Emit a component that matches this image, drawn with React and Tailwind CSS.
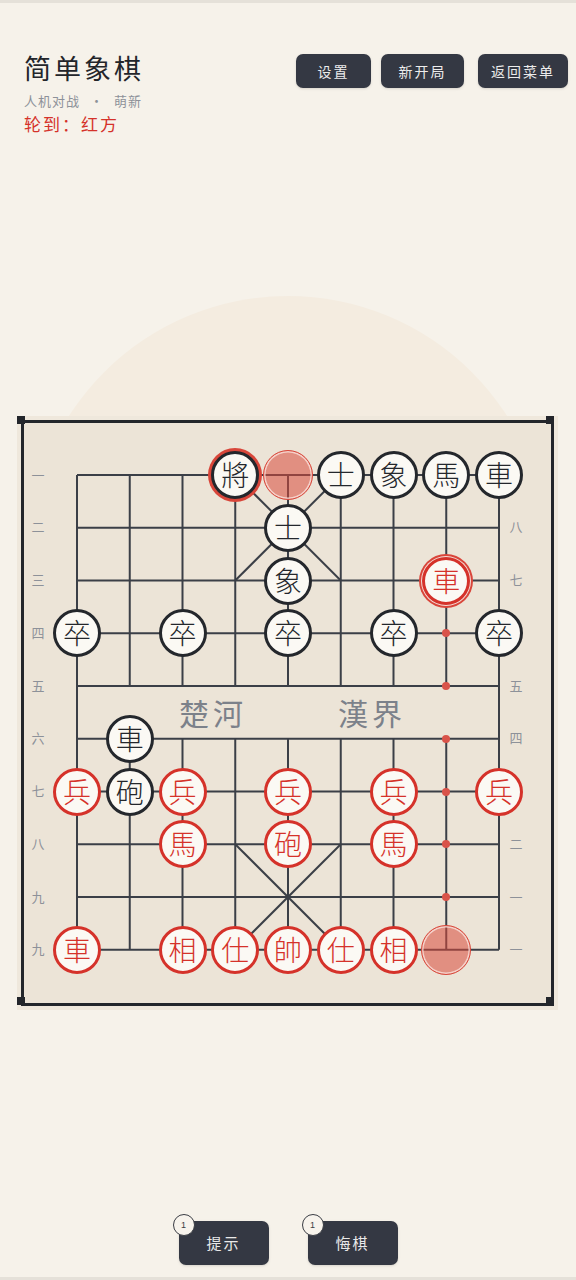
import React from 'react'

const CELL = 52.75
const OX = 53
const OY = 52
const gx = (c) => OX + c * CELL
const gy = (r) => OY + r * CELL

const pieces = [
  { c: 3, r: 0, t: '將', side: 'black', hl: true },
  { c: 5, r: 0, t: '士', side: 'black' },
  { c: 6, r: 0, t: '象', side: 'black' },
  { c: 7, r: 0, t: '馬', side: 'black' },
  { c: 8, r: 0, t: '車', side: 'black' },
  { c: 4, r: 1, t: '士', side: 'black' },
  { c: 4, r: 2, t: '象', side: 'black' },
  { c: 7, r: 2, t: '車', side: 'red', selected: true },
  { c: 0, r: 3, t: '卒', side: 'black' },
  { c: 2, r: 3, t: '卒', side: 'black' },
  { c: 4, r: 3, t: '卒', side: 'black' },
  { c: 6, r: 3, t: '卒', side: 'black' },
  { c: 8, r: 3, t: '卒', side: 'black' },
  { c: 1, r: 5, t: '車', side: 'black' },
  { c: 0, r: 6, t: '兵', side: 'red' },
  { c: 1, r: 6, t: '砲', side: 'black' },
  { c: 2, r: 6, t: '兵', side: 'red' },
  { c: 4, r: 6, t: '兵', side: 'red' },
  { c: 6, r: 6, t: '兵', side: 'red' },
  { c: 8, r: 6, t: '兵', side: 'red' },
  { c: 2, r: 7, t: '馬', side: 'red' },
  { c: 4, r: 7, t: '砲', side: 'red' },
  { c: 6, r: 7, t: '馬', side: 'red' },
  { c: 0, r: 9, t: '車', side: 'red' },
  { c: 2, r: 9, t: '相', side: 'red' },
  { c: 3, r: 9, t: '仕', side: 'red' },
  { c: 4, r: 9, t: '帥', side: 'red' },
  { c: 5, r: 9, t: '仕', side: 'red' },
  { c: 6, r: 9, t: '相', side: 'red' },
]

const lastMove = [
  { c: 4, r: 0 },
  { c: 7, r: 9 },
]

const dots = [3, 4, 5, 6, 7, 8].map((r) => ({ c: 7, r }))

const leftLabels = ['一', '二', '三', '四', '五', '六', '七', '八', '九', '九']
// rows covered by a piece on the right edge show no label
const rightLabels = ['', '八', '七', '', '五', '四', '', '二', '一', '一']

const CJK = "font-['Noto_Sans_CJK_SC','Noto_Sans_CJK_TC',sans-serif]"

function Grid() {
  const lines = []
  for (let r = 0; r < 10; r++) {
    lines.push(<line key={'h' + r} x1={gx(0)} y1={gy(r)} x2={gx(8)} y2={gy(r)} />)
  }
  for (let c = 0; c < 9; c++) {
    if (c === 0 || c === 8) {
      lines.push(<line key={'v' + c} x1={gx(c)} y1={gy(0)} x2={gx(c)} y2={gy(9)} />)
    } else {
      lines.push(<line key={'vt' + c} x1={gx(c)} y1={gy(0)} x2={gx(c)} y2={gy(4)} />)
      lines.push(<line key={'vb' + c} x1={gx(c)} y1={gy(5)} x2={gx(c)} y2={gy(9)} />)
    }
  }
  // palaces
  lines.push(<line key="p1" x1={gx(3)} y1={gy(0)} x2={gx(5)} y2={gy(2)} />)
  lines.push(<line key="p2" x1={gx(5)} y1={gy(0)} x2={gx(3)} y2={gy(2)} />)
  lines.push(<line key="p3" x1={gx(3)} y1={gy(7)} x2={gx(5)} y2={gy(9)} />)
  lines.push(<line key="p4" x1={gx(5)} y1={gy(7)} x2={gx(3)} y2={gy(9)} />)

  return (
    <svg className="absolute inset-0 w-full h-full" stroke="#3b3f47" strokeWidth="2" fill="none">
      {lines}
    </svg>
  )
}

function Piece({ p }) {
  const red = p.side === 'red'
  let ring = ''
  if (p.hl) ring = 'shadow-[0_0_0_3px_#d8463a]'
  if (p.selected) ring = 'shadow-[0_0_0_1px_#f4dcd7,0_0_0_3px_#d9453a]'
  return (
    <div
      className={`absolute w-12 h-12 rounded-full border-[3px] flex items-center justify-center bg-[#fbf9f4] text-[28px] leading-none font-light ${CJK} ${
        red ? 'border-[#d5322a] text-[#d5322a]' : 'border-[#24272c] text-[#24272c]'
      } ${ring}`}
      style={{ left: gx(p.c) - 24, top: gy(p.r) - 24 }}
    >
      <span className="-mt-[2px]">{p.t}</span>
    </div>
  )
}

function Labels({ items }) {
  return (
    <div className="flex flex-col w-5 text-center text-[13px] text-[#8d9199]">
      {items.map((l, r) => (
        <span key={r} className="h-[52.75px] leading-[52.75px]">
          {l}
        </span>
      ))}
    </div>
  )
}

export default function App() {
  return (
    <div className={`relative w-[576px] h-[1280px] overflow-hidden bg-[#f6f2ea] flex flex-col ${CJK}`}>
      <div className="h-[3px] w-full bg-[#e5e1d9]" />

      {/* soft halo behind the board */}
      <div className="absolute left-[28px] top-[296px] w-[520px] h-[520px] rounded-full bg-[#f4ece0]" />

      <div className="flex justify-between items-start pt-[49px] pl-6 pr-2">
        <div>
          <h1 className="text-[27px] leading-[32px] tracking-[3px] text-[#23252a]">简单象棋</h1>
          <p className="mt-[9px] text-[13px] leading-[16px] tracking-[1px] text-[#8d9199]">
            人机对战<span className="mx-[10px]">•</span>萌新
          </p>
          <p className="mt-[4px] text-[17px] leading-[22px] tracking-[2px] text-[#d5322a]">轮到：红方</p>
        </div>
        <div className="flex mt-[2px]">
          <button className="w-[75px] h-[34px] rounded-[7px] bg-[#343843] text-[#ececec] text-[14px] tracking-[2px] shadow-sm">
            设置
          </button>
          <button className="ml-[10px] w-[83px] h-[34px] rounded-[7px] bg-[#343843] text-[#ececec] text-[14px] tracking-[2px] shadow-sm">
            新开局
          </button>
          <button className="ml-[14px] w-[90px] h-[34px] rounded-[7px] bg-[#343843] text-[#ececec] text-[14px] tracking-[2px] shadow-sm">
            返回菜单
          </button>
        </div>
      </div>

      <div className="relative mt-[281px] ml-[17px] w-[541px] h-[594px] p-1 bg-[#efe8dc]">
        <div className="relative w-full h-full border-[3px] border-[#23262b] bg-[#ece4d7]">
          <Grid />

          <div className="absolute inset-x-0 top-[25.6px] flex justify-between pl-[4px] pr-[25px]">
            <Labels items={leftLabels} />
            <Labels items={rightLabels} />
          </div>

          <div className="absolute inset-x-0 top-[264px] h-[50px] flex items-center justify-center gap-[91px] pl-[10px] text-[30px] leading-none tracking-[4px] text-[#7c818a]">
            <span>楚河</span>
            <span>漢界</span>
          </div>

          {dots.map((d) => (
            <div
              key={'d' + d.r}
              className="absolute w-2 h-2 rounded-full bg-[#d9534a]"
              style={{ left: gx(d.c) - 4, top: gy(d.r) - 4 }}
            />
          ))}

          {pieces.map((p, i) => (
            <Piece key={i} p={p} />
          ))}

          {lastMove.map((m, i) => (
            <div
              key={'m' + i}
              className="absolute w-[50px] h-[50px] rounded-full border-[1.5px] border-[#d9483b] bg-[rgba(217,72,59,0.55)] shadow-[inset_0_0_0_1.5px_rgba(250,225,220,0.8)]"
              style={{ left: gx(m.c) - 25, top: gy(m.r) - 25 }}
            />
          ))}
        </div>

        <div className="absolute left-0 top-0 w-2 h-2 bg-[#23262b]" />
        <div className="absolute left-[529px] top-0 w-2 h-2 bg-[#23262b]" />
        <div className="absolute left-0 top-[581px] w-2 h-2 bg-[#23262b]" />
        <div className="absolute left-[529px] top-[581px] w-2 h-2 bg-[#23262b]" />
      </div>

      <div className="mt-[211px] flex justify-center gap-[39px]">
        {['提示', '悔棋'].map((t) => (
          <div key={t} className="relative">
            <button className="w-[90px] h-[44px] rounded-[7px] bg-[#343843] text-[#e9e9e9] text-[15px] tracking-[2px] shadow-sm">
              {t}
            </button>
            <span className="absolute -left-[6px] -top-[7px] w-[22px] h-[22px] rounded-full border border-[#3a3d44] bg-[#f7f3ec] flex items-center justify-center text-[9px] leading-none text-[#3a3d44] font-['Liberation_Sans',sans-serif]">
              1
            </span>
          </div>
        ))}
      </div>

      <div className="mt-auto h-[3px] w-full bg-[#e5e1d9]" />
    </div>
  )
}
